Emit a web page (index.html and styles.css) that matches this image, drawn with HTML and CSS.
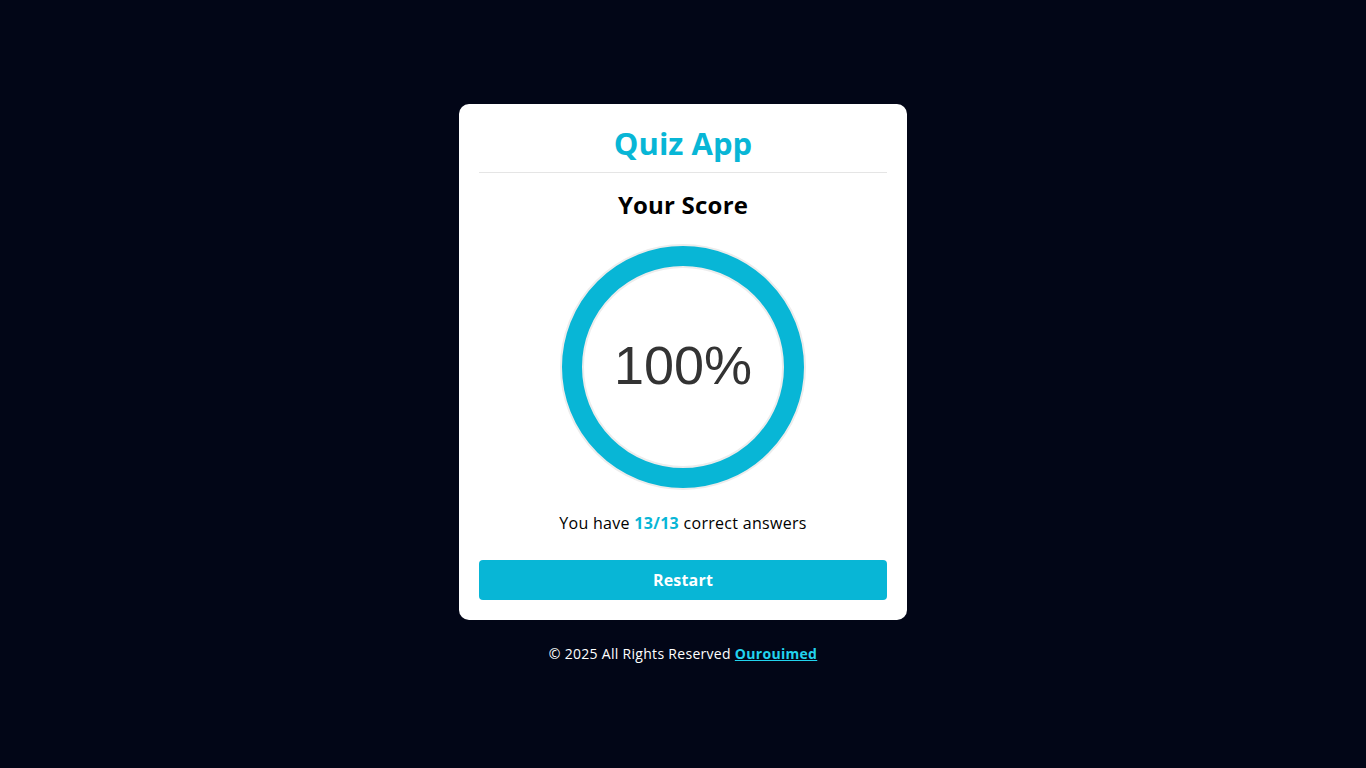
FILE: index.html
```html
<!DOCTYPE html>
<html lang="en">
<head>
<meta charset="UTF-8">
<title>Quiz App</title>
<link rel="stylesheet" href="styles.css">
</head>
<body>
<main class="page">
  <section class="card">
    <header class="card-header">
      <h1 class="title">Quiz App</h1>
    </header>
    <h2 class="score-title">Your Score</h2>
    <div class="ring">
      <svg class="ring-svg" width="246" height="246" viewBox="0 0 246 246">
        <circle cx="123" cy="123" r="111" fill="none" stroke="#ececec" stroke-width="24"/>
        <circle cx="123" cy="123" r="111" fill="none" stroke="#08b6d6" stroke-width="20"/>
      </svg>
      <span class="ring-label">100%</span>
    </div>
    <p class="result">You have <strong class="count">13/13</strong> correct answers</p>
    <button class="restart" type="button">Restart</button>
  </section>
  <footer class="footer">© 2025 All Rights Reserved <a class="footer-link" href="#">Ourouimed</a></footer>
</main>
</body>
</html>
```
FILE: styles.css
```css
* { box-sizing: border-box; }
html, body { margin: 0; height: 100%; }
body {
  background: #020617;
  font-family: "Open Sans", "Noto Sans", sans-serif;
}
.page {
  min-height: 100%;
  display: flex;
  flex-direction: column;
  align-items: center;
  justify-content: center;
  gap: 23px;
}
.card {
  width: 448px;
  background: #fff;
  border-radius: 10px;
  padding: 20px;
  display: flex;
  flex-direction: column;
  align-items: center;
}
.card-header {
  width: 100%;
  border-bottom: 1px solid #e5e5e5;
  padding-bottom: 10px;
  text-align: center;
}
.title {
  margin: 0;
  font-size: 31px;
  line-height: 38px;
  font-weight: 700;
  color: #08b6d6;
}
.score-title {
  margin: 14px 0 0;
  font-size: 24px;
  line-height: 36px;
  font-weight: 700;
  letter-spacing: 0.2px;
  color: #000;
}
.ring {
  margin-top: 21px;
  position: relative;
  width: 246px;
  height: 246px;
  display: flex;
  align-items: center;
  justify-content: center;
}
.ring-svg { position: absolute; inset: 0; }
.ring-label {
  position: relative;
  font-family: "Liberation Sans", Arial, sans-serif;
  font-size: 54px;
  color: #333;
  margin-top: -4px;
}
.result {
  margin: 21px 0 0;
  font-size: 16px;
  line-height: 24px;
  letter-spacing: 0.3px;
  color: #000;
}
.count { color: #08b6d6; font-weight: 700; }
.restart {
  margin-top: 25px;
  width: 100%;
  height: 40px;
  border: 0;
  border-radius: 4px;
  background: #08b6d6;
  color: #fff;
  font-family: inherit;
  font-size: 16px;
  font-weight: 700;
  letter-spacing: 0.2px;
}
.footer {
  color: #fff;
  font-size: 14px;
  line-height: 21px;
  letter-spacing: 0.3px;
}
.footer-link { color: #22d3ee; font-weight: 700; }
```
